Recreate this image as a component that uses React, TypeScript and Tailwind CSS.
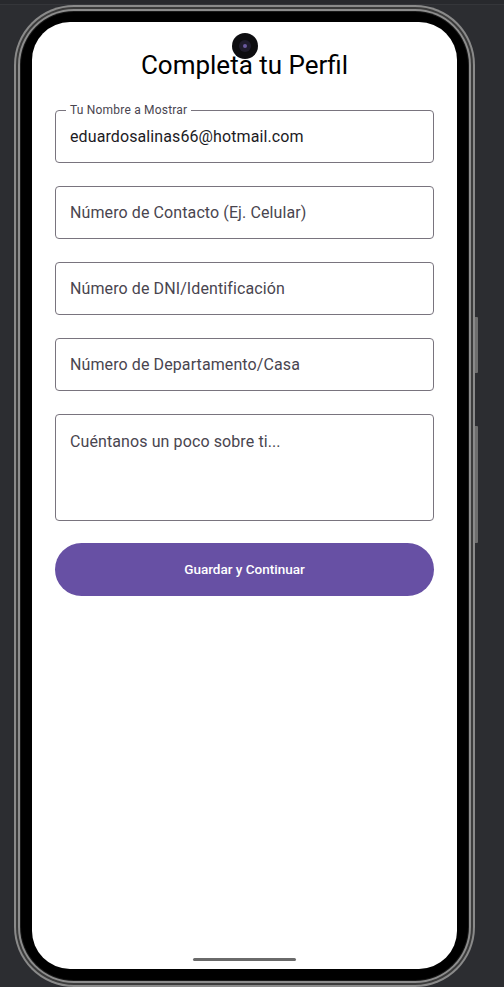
import React from 'react';

const fieldBase =
  'relative w-full rounded-[4px] border border-[#79747e] px-[14px] text-[16px] tracking-[0.1px] text-[#1c1b1f]';

const Field = ({ label, value, placeholder }: { label?: string; value?: string; placeholder?: string }) => (
  <div className={`${fieldBase} flex h-[53px] items-center`}>
    {label && (
      <span className="absolute -top-[8px] left-[10px] bg-white px-[4px] text-[12px] leading-[14px] tracking-[0.2px] text-[#49454f]">
        {label}
      </span>
    )}
    {value ? <span>{value}</span> : <span className="text-[#49454f]">{placeholder}</span>}
  </div>
);

export default function App() {
  return (
    <div
      className="h-[987px] w-full overflow-hidden bg-[#2c2d31]"
      style={{ fontFamily: 'Roboto, "Noto Sans", sans-serif' }}
    >
      {/* Barre supérieure */}
      <div className="h-[5px] w-full border-b border-[#35363a] bg-[#28292d]" />

      <div className="pl-[14px]">
        {/* Cadre du téléphone */}
        <div className="relative h-[982px] w-[461px] rounded-[60px] bg-[#8a8a8a] p-[2px]">
          {/* Boutons latéraux */}
          <div className="absolute left-[461px] top-[312px] h-[56px] w-[3px] rounded-r-[1px] bg-[#6e6e6e]" />
          <div className="absolute left-[461px] top-[421px] h-[117px] w-[3px] rounded-r-[1px] bg-[#6e6e6e]" />

          <div className="h-full w-full rounded-[58px] bg-[#3b3b3b] p-[2px]">
            <div className="h-full w-full rounded-[56px] bg-[#8d8d8d] p-[2px]">
              <div className="h-full w-full rounded-[54px] bg-[#1a1a1a] p-[1px]">
                <div className="h-full w-full rounded-[53px] bg-black pb-[11px] pl-[11px] pr-[11px] pt-[10px]">
                  {/* Écran */}
                  <div className="relative flex h-full w-full flex-col overflow-hidden rounded-[38px] bg-white px-[23px]">
                    {/* Caméra */}
                    <div className="absolute left-[200px] top-[11px] flex h-[26px] w-[26px] items-center justify-center rounded-full bg-[#0d0d10]">
                      <div className="flex h-[12px] w-[12px] items-center justify-center rounded-full bg-[#1f1c2c]">
                        <div className="h-[4px] w-[4px] rounded-full bg-[#6b5aa0]" />
                      </div>
                    </div>

                    <h1 className="pt-[27px] text-center text-[26px] leading-[32px] text-black">Completa tu Perfil</h1>

                    <div className="mt-[29px] flex flex-col gap-[23px]">
                      <Field label="Tu Nombre a Mostrar" value="eduardosalinas66@hotmail.com" />
                      <Field placeholder="Número de Contacto (Ej. Celular)" />
                      <Field placeholder="Número de DNI/Identificación" />
                      <Field placeholder="Número de Departamento/Casa" />
                      <div className={`${fieldBase} h-[107px] pt-[15px] leading-[24px] text-[#49454f]`}>
                        Cuéntanos un poco sobre ti...
                      </div>
                      <button className="-mt-[1px] h-[53px] w-full rounded-full bg-[#6750a4] text-[13.5px] font-medium text-white">
                        Guardar y Continuar
                      </button>
                    </div>

                    {/* Indicateur d'accueil */}
                    <div className="absolute bottom-[8px] left-[161px] h-[3px] w-[103px] rounded-full bg-[#6a6a6a]" />
                  </div>
                </div>
              </div>
            </div>
          </div>
        </div>
      </div>
    </div>
  );
}
